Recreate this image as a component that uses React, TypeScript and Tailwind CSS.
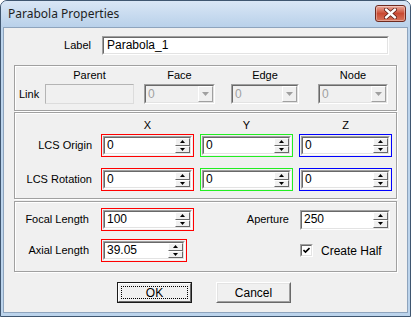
import type { ReactNode } from 'react';

const Tri = ({ down, color = '#000' }: { down?: boolean; color?: string }) => (
  <svg width="5" height="3" viewBox="0 0 5 3">
    <polygon points={down ? '0,0 5,0 2.5,3' : '0,3 5,3 2.5,0'} fill={color} />
  </svg>
);

const SpinBtn = ({ down }: { down?: boolean }) => (
  <div className="flex-1 flex items-center justify-center bg-[#f0f0f0] border border-t-white border-l-white border-b-[#696969] border-r-[#696969]">
    <Tri down={down} />
  </div>
);

// sunken edit field with optional spinner
const Field = ({ value, className = '', spin = true }: { value: string; className?: string; spin?: boolean }) => (
  <div className={`flex h-[19px] border border-t-[#a0a0a0] border-l-[#a0a0a0] border-b-white border-r-white ${className}`}>
    <div className="flex flex-1 bg-white border border-t-[#696969] border-l-[#696969] border-b-[#e3e3e3] border-r-[#e3e3e3]">
      <span className="flex-1 pl-[2px] leading-[15px] text-[12px]">{value}</span>
      {spin && (
        <div className="w-[15px] flex flex-col">
          <SpinBtn />
          <SpinBtn down />
        </div>
      )}
    </div>
  </div>
);

const Boxed = ({ color, children, className = '' }: { color: string; children: ReactNode; className?: string }) => (
  <div className={`border p-[1px] ${color} ${className}`}>{children}</div>
);

const Combo = ({ className = '' }: { className?: string }) => (
  <div className={`flex h-[20px] border border-t-[#a0a0a0] border-l-[#a0a0a0] border-b-white border-r-white ${className}`}>
    <div className="flex flex-1 bg-[#f0f0f0] border border-t-[#696969] border-l-[#696969] border-b-[#e3e3e3] border-r-[#e3e3e3]">
      <span className="flex-1 pl-[2px] leading-[16px] text-[#a0a0a0] text-[12px]">0</span>
      <div className="w-[15px] flex items-center justify-center bg-[#f0f0f0] border border-t-white border-l-white border-b-[#a0a0a0] border-r-[#a0a0a0]">
        <svg width="7" height="4" viewBox="0 0 7 4">
          <polygon points="0,0 7,0 3.5,4" fill="#a0a0a0" />
        </svg>
      </div>
    </div>
  </div>
);

const Group = ({ className = '', children }: { className?: string; children: ReactNode }) => (
  <div
    className={`ml-[10px] w-[383px] border border-[#a0a0a0] shadow-[inset_1px_1px_0_#ffffff,1px_1px_0_#ffffff] ${className}`}
  >
    {children}
  </div>
);

export default function App() {
  return (
    <div className="w-[411px] h-[317px] flex flex-col bg-[#bcd4ec] border border-[#3f5670] rounded-t-[7px] font-['Liberation_Sans',Arial,sans-serif] text-[11px] text-black overflow-hidden">
      {/* Title bar */}
      <div className="h-[26px] flex items-start pl-[7px] pr-[4px] bg-gradient-to-b from-[#d9e6f5] to-[#b9d1ea]">
        <span className="mt-[5px] font-['Noto_Sans',sans-serif] text-[12px] leading-[16px] text-[#1e1e1e]">
          Parabola Properties
        </span>
        <div className="ml-auto mt-[4px] w-[31px] h-[17px] rounded-[3px] border border-[#6e2a20] bg-gradient-to-b from-[#e9a99b] via-[#c94a33] to-[#d7745c] flex items-center justify-center shadow-[inset_0_0_0_1px_rgba(255,255,255,0.35)]">
          <svg width="13" height="11" viewBox="0 0 13 11">
            <path d="M2 1.5 L11 9.5 M11 1.5 L2 9.5" stroke="#5a1c14" strokeWidth="4" strokeLinecap="round" />
            <path d="M2 1.5 L11 9.5 M11 1.5 L2 9.5" stroke="#ffffff" strokeWidth="2.4" strokeLinecap="round" />
          </svg>
        </div>
      </div>

      {/* Client area */}
      <div className="flex-1 mx-[2px] mb-[3px] bg-[#f0f0f0] border border-[#8ea4bd] flex flex-col">
        {/* Label */}
        <div className="mt-[8px] flex items-center">
          <span className="w-[87px] text-right">Label</span>
          <div className="ml-[11px] w-[287px] h-[19px] border border-t-[#a0a0a0] border-l-[#a0a0a0] border-b-white border-r-white">
            <div className="h-full bg-white border border-t-[#696969] border-l-[#696969] border-b-[#e3e3e3] border-r-[#e3e3e3] pl-[3px] leading-[15px] text-[12px]">
              Parabola_1
            </div>
          </div>
        </div>

        {/* Link group */}
        <Group className="mt-[10px] h-[46px] pt-[2px]">
          <div className="flex h-[14px] items-center">
            <span className="w-[30px]" />
            <span className="w-[89px] text-center">Parent</span>
            <span className="ml-[10px] w-[71px] text-center">Face</span>
            <span className="ml-[16px] w-[68px] text-center">Edge</span>
            <span className="ml-[19px] w-[70px] text-center">Node</span>
          </div>
          <div className="mt-[2px] flex items-center">
            <span className="w-[30px] pl-[4px]">Link</span>
            <div className="w-[89px] h-[20px] bg-[#f0f0f0] border border-t-[#b4b4b4] border-l-[#b4b4b4] border-b-[#dcdcdc] border-r-[#dcdcdc]" />
            <Combo className="ml-[10px] w-[71px]" />
            <Combo className="ml-[16px] w-[68px]" />
            <Combo className="ml-[19px] w-[70px]" />
          </div>
        </Group>

        {/* LCS group */}
        <Group className="mt-[1px] h-[87px] pt-[5px]">
          <div className="flex h-[14px] items-center">
            <span className="w-[86px]" />
            <span className="w-[93px] text-center">X</span>
            <span className="ml-[6px] w-[93px] text-center">Y</span>
            <span className="ml-[6px] w-[93px] text-center">Z</span>
          </div>
          <div className="mt-[2px] flex items-center">
            <span className="w-[77px] text-right">LCS Origin</span>
            <Boxed color="border-[#ff0000]" className="ml-[9px] w-[93px]">
              <Field value="0" />
            </Boxed>
            <Boxed color="border-[#22ee22]" className="ml-[6px] w-[93px]">
              <Field value="0" />
            </Boxed>
            <Boxed color="border-[#0000ff]" className="ml-[6px] w-[93px]">
              <Field value="0" />
            </Boxed>
          </div>
          <div className="mt-[11px] flex items-center">
            <span className="w-[77px] text-right">LCS Rotation</span>
            <Boxed color="border-[#ff0000]" className="ml-[9px] w-[93px]">
              <Field value="0" />
            </Boxed>
            <Boxed color="border-[#22ee22]" className="ml-[6px] w-[93px]">
              <Field value="0" />
            </Boxed>
            <Boxed color="border-[#0000ff]" className="ml-[6px] w-[93px]">
              <Field value="0" />
            </Boxed>
          </div>
        </Group>

        {/* Parabola params */}
        <Group className="mt-[2px] h-[71px] pt-[6px]">
          <div className="flex items-center">
            <span className="w-[74px] text-right">Focal Length</span>
            <Boxed color="border-[#ff0000]" className="ml-[12px] w-[93px]">
              <Field value="100" />
            </Boxed>
            <span className="w-[95px] text-right">Aperture</span>
            <Field value="250" className="ml-[11px] w-[90px] h-[20px]" />
          </div>
          <div className="mt-[8px] flex items-center">
            <span className="w-[74px] text-right">Axial Length</span>
            <Boxed color="border-[#ff0000]" className="ml-[12px] w-[86px]">
              <Field value="39.05" />
            </Boxed>
            <div className="ml-[113px] w-[13px] h-[13px] border border-t-[#a0a0a0] border-l-[#a0a0a0] border-b-white border-r-white">
              <div className="h-full bg-white border border-t-[#696969] border-l-[#696969] border-b-[#e3e3e3] border-r-[#e3e3e3] flex items-center justify-center">
                <svg width="7" height="7" viewBox="0 0 7 7">
                  <path d="M0.5 3 L2.5 5 L6.5 1" stroke="#000" strokeWidth="1.6" fill="none" />
                </svg>
              </div>
            </div>
            <span className="ml-[8px] text-[12px]">Create Half</span>
          </div>
        </Group>

        {/* Buttons */}
        <div className="mt-[10px] pl-[113px] flex gap-[24px]">
          <button className="w-[75px] h-[21px] border border-[#1a1a1a] p-0">
            <div className="h-full border border-t-white border-l-white border-b-[#696969] border-r-[#696969] bg-[#f0f0f0] p-[2px]">
              <div className="h-full border border-dotted border-black flex items-center justify-center text-[12px] leading-none">
                OK
              </div>
            </div>
          </button>
          <button className="w-[75px] h-[21px] border border-t-white border-l-white border-b-[#696969] border-r-[#696969] p-0">
            <div className="h-full border border-b-[#a0a0a0] border-r-[#a0a0a0] border-t-[#e3e3e3] border-l-[#e3e3e3] bg-[#f0f0f0] flex items-center justify-center text-[12px] leading-none">
              Cancel
            </div>
          </button>
        </div>
      </div>
    </div>
  );
}
